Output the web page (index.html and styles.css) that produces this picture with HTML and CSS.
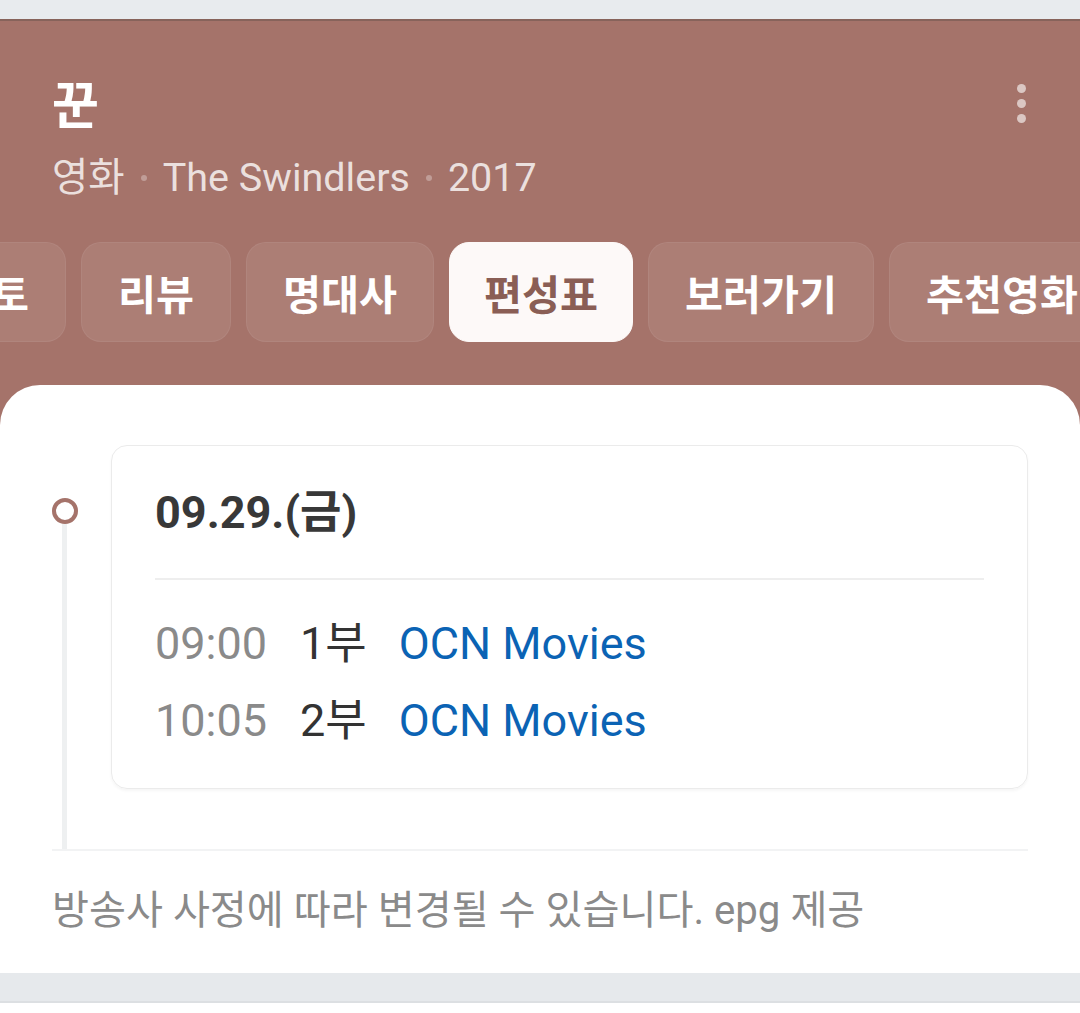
FILE: index.html
```html
<!DOCTYPE html>
<html lang="ko">
<head>
<meta charset="utf-8">
<link rel="stylesheet" href="styles.css">
</head>
<body>
<div class="top-gap"></div>
<section class="hero">
  <div class="title-row">
    <h1 class="title">꾼</h1>
    <div class="more" aria-label="더보기"><span></span><span></span><span></span></div>
  </div>
  <div class="sub">
    <span>영화</span><i class="sep"></i><span>The Swindlers</span><i class="sep"></i><span>2017</span>
  </div>
  <nav class="tabs">
    <div class="tab-track">
      <a class="tab">포토</a>
      <a class="tab">리뷰</a>
      <a class="tab">명대사</a>
      <a class="tab active">편성표</a>
      <a class="tab">보러가기</a>
      <a class="tab">추천영화</a>
    </div>
  </nav>
  <div class="card">
    <div class="schedule">
      <div class="timeline"><span class="dot"></span><span class="line"></span></div>
      <div class="day-card">
        <div class="date">09.29.(금)</div>
        <ul class="rows">
          <li><span class="time">09:00</span><span class="ep">1부</span><a class="ch">OCN Movies</a></li>
          <li><span class="time">10:05</span><span class="ep">2부</span><a class="ch">OCN Movies</a></li>
        </ul>
      </div>
    </div>
    <p class="note">방송사 사정에 따라 변경될 수 있습니다. epg 제공</p>
  </div>
</section>
<div class="bottom-gap"></div>
</body>
</html>
```
FILE: styles.css
```css
* { box-sizing: border-box; }
html, body { margin: 0; padding: 0; }
body {
  background: #ffffff;
  font-family: Roboto, "Noto Sans CJK KR", sans-serif;
  width: 1080px;
  overflow: hidden;
}
.top-gap { height: 19px; background: #e8ebee; }
.hero {
  background: #a5736a;
  border-top: 2px solid #87635b;
  padding-top: 56px;
}
.title-row {
  display: flex;
  justify-content: space-between;
  align-items: flex-start;
  padding: 0 52px;
}
.title {
  margin: 0;
  font-size: 51px;
  line-height: 60px;
  font-weight: 700;
  color: #ffffff;
}
.more {
  display: flex;
  flex-direction: column;
  gap: 6px;
  padding-top: 7px;
  margin-right: 2px;
}
.more span {
  width: 9px; height: 9px; border-radius: 50%;
  background: rgba(255,255,255,0.6);
}
.sub {
  display: flex;
  align-items: center;
  margin: 16px 52px 0;
  font-size: 39.5px;
  line-height: 50px;
  color: rgba(255,255,255,0.78);
}
.sep {
  display: inline-block;
  width: 6px; height: 6px; border-radius: 50%;
  background: rgba(255,255,255,0.3);
  margin: 0 16px;
}
.tabs {
  margin-top: 39px;
  overflow: hidden;
}
.tab-track {
  display: flex;
  gap: 15px;
  margin-left: -84px;
  width: max-content;
}
.tab {
  display: flex;
  align-items: center;
  height: 100px;
  padding: 0 36px;
  border-radius: 20px;
  background: rgba(255,255,255,0.08);
  border: 1px solid rgba(255,255,255,0.06);
  color: #ffffff;
  font-size: 41.3px;
  font-weight: 700;
  white-space: nowrap;
}
.tab.active {
  background: #fdf9f8;
  border-color: #fdf9f8;
  color: #8a5e55;
  padding: 0 34px;
}
.card {
  margin-top: 43px;
  background: #ffffff;
  border-radius: 40px 40px 0 0;
  padding: 60px 52px 0;
}
.schedule {
  display: flex;
  padding-bottom: 60px;
  border-bottom: 2px solid #f2f3f4;
}
.timeline {
  width: 59px;
  flex: none;
  display: flex;
  flex-direction: column;
  align-items: flex-start;
}
.dot {
  margin-top: 53px;
  width: 26px; height: 26px;
  border-radius: 50%;
  border: 4px solid #a5736a;
  background: #fff;
  flex: none;
}
.line {
  flex: 1;
  width: 5px;
  margin-left: 10px;
  margin-bottom: -60px;
  background: #eef0f1;
}
.day-card {
  flex: 1;
  border: 1px solid #ebebeb;
  border-radius: 16px;
  box-shadow: 0 2px 3px rgba(0,0,0,0.04);
  padding: 39px 43px 29px;
}
.date {
  font-size: 45px;
  line-height: 56px;
  font-weight: 700;
  color: #383838;
  padding-bottom: 37px;
  border-bottom: 2px solid #eeeeee;
}
.rows {
  list-style: none;
  margin: 0;
  padding: 25px 0 0;
}
.rows li {
  display: flex;
  font-size: 45px;
  line-height: 77px;
  white-space: nowrap;
}
.time { color: #8a8a8a; margin-right: 33px; }
.ep { color: #333333; margin-right: 32px; }
.ch { color: #0b63b4; }
.note {
  margin: 0;
  padding: 35px 0 37px;
  font-size: 40.2px;
  line-height: 50px;
  color: #8a8a8a;
}
.bottom-gap {
  height: 30px;
  background: #e6e9ec;
  border-bottom: 2px solid #dcdfe2;
}
```
